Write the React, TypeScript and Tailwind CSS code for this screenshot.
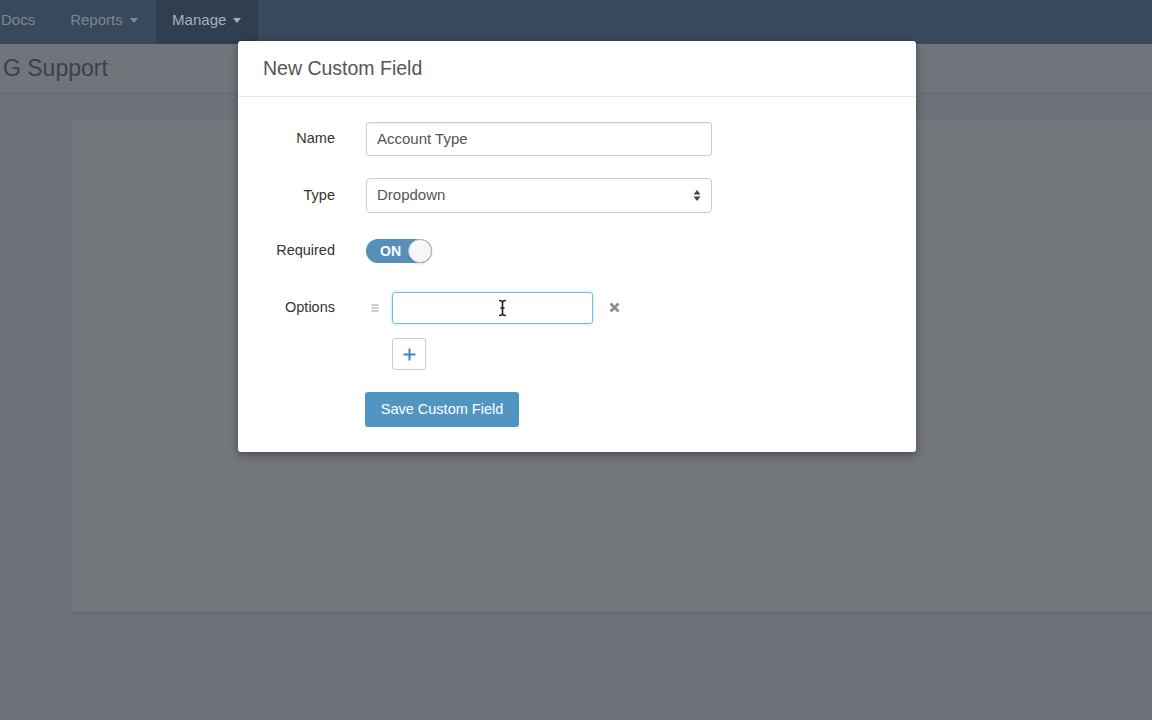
import React from 'react';

const font = { fontFamily: '"Liberation Sans", Arial, sans-serif' };

function NavBar() {
    return (
        <div className="flex h-[44px] items-stretch bg-[#38495b] pb-[4px] text-[15px]">
            <div className="flex items-center pl-[1px] pr-[35px] text-[#7b8795]">Docs</div>
            <div className="flex items-center gap-[7px] pr-[18px] text-[#7b8795]">
                Reports
                <span className="mt-[1px] h-0 w-0 border-x-[4px] border-t-[5px] border-x-transparent border-t-[#7b8795]" />
            </div>
            <div className="-mb-[4px] flex w-[102px] items-center justify-center gap-[7px] bg-[#2f3f50] pb-[4px] text-[#a7afb8]">
                Manage
                <span className="mt-[1px] h-0 w-0 border-x-[4px] border-t-[5px] border-x-transparent border-t-[#a7afb8]" />
            </div>
        </div>
    );
}

function Toggle() {
    return (
        <div className="flex h-[24px] w-[66px] items-center rounded-full bg-[#5590bb] pl-[14px]">
            <span className="text-[14px] font-bold text-white">ON</span>
            <span className="ml-auto h-[24px] w-[24px] rounded-full border border-[#b9b9b9] bg-[#f7f7f7] shadow-sm" />
        </div>
    );
}

function Row({ label, children, className }: { label: string; children: React.ReactNode; className?: string }) {
    return (
        <div className={'flex items-center gap-[31px] ' + (className ?? '')}>
            <label className="w-[72px] text-right text-[14.5px] text-[#333]">{label}</label>
            {children}
        </div>
    );
}

function CustomFieldModal() {
    return (
        <div className="absolute left-[238px] top-[41px] w-[678px] rounded-[3px] bg-white shadow-[0_3px_9px_rgba(0,0,0,0.35)]">
            <div className="flex h-[56px] items-center border-b border-[#e9e9e9] px-[25px]">
                <h4 className="text-[19.5px] text-[#555]">New Custom Field</h4>
            </div>
            <div className="px-[25px] pb-[25px] pt-[25px]">
                <Row label="Name">
                    <div className="flex h-[34px] w-[346px] items-center rounded-[3px] border border-[#ccc] px-[10px] text-[15px] text-[#555] shadow-[inset_0_1px_1px_rgba(0,0,0,0.06)]">
                        Account Type
                    </div>
                </Row>
                <Row label="Type" className="mt-[22px]">
                    <div className="flex h-[35px] w-[346px] items-center rounded-[4px] border border-[#ccc] px-[10px] text-[15px] text-[#555]">
                        Dropdown
                        <svg className="ml-auto" width="8" height="13" viewBox="0 0 8 13">
                            <path d="M4 1 L7.5 5.5 H0.5 Z" fill="#444" />
                            <path d="M4 12 L7.5 7.5 H0.5 Z" fill="#444" />
                        </svg>
                    </div>
                </Row>
                <Row label="Required" className="mt-[21px] h-[34px]">
                    <Toggle />
                </Row>
                <Row label="Options" className="mt-[24px]">
                    <div className="flex items-center">
                        <svg width="8" height="8" viewBox="0 0 8 8" className="ml-[5px] mr-[13px]">
                            <path d="M0.5 1 H7.5 M0.5 4 H7.5 M0.5 7 H7.5" stroke="#999" strokeWidth="1" />
                        </svg>
                        <div className="relative h-[32px] w-[201px] rounded-[3px] border border-[#6fc3d2] shadow-[0_0_3px_rgba(102,194,212,0.5)]">
                            {/* text cursor over the field */}
                            <svg className="absolute left-[105px] top-[6px]" width="9" height="18" viewBox="0 0 9 18">
                                <path d="M1 1.5 C3 1.5 4.5 2 4.5 3.5 V14.5 C4.5 16 3 16.5 1 16.5 M8 1.5 C6 1.5 4.5 2 4.5 3.5 M4.5 14.5 C4.5 16 6 16.5 8 16.5 M2.5 9 H6.5" stroke="#222" strokeWidth="1.6" fill="none" />
                            </svg>
                        </div>
                        <svg width="11" height="11" viewBox="0 0 11 11" className="ml-[16px] -mt-[2px]">
                            <path d="M1.5 1.5 L9.5 9.5 M9.5 1.5 L1.5 9.5" stroke="#8a8a8a" strokeWidth="2.6" />
                        </svg>
                    </div>
                </Row>
                <div className="ml-[129px] mt-[14px] flex h-[32px] w-[34px] items-center justify-center rounded-[3px] border border-[#ccc] bg-white">
                    <svg width="13" height="13" viewBox="0 0 13 13">
                        <path d="M6.5 0.5 V12.5 M0.5 6.5 H12.5" stroke="#3d87bd" strokeWidth="2" />
                    </svg>
                </div>
                <button className="ml-[102px] mt-[22px] h-[35px] w-[154px] rounded-[3px] bg-[#5196c2] text-[14.5px] text-white">
                    Save Custom Field
                </button>
            </div>
        </div>
    );
}

export default function App() {
    return (
        <div className="relative h-[720px] w-[1152px] overflow-hidden bg-[#6e717a]" style={font}>
            <NavBar />
            <div className="flex h-[50px] items-center border-b border-[#676a72] bg-[#71747b] pl-[3px]">
                <h1 className="text-[23px] text-[#3b414c]">G Support</h1>
            </div>
            <div className="ml-[70px] mt-[24px] h-[495px] rounded-l-[3px] border border-r-0 border-[#686b72] bg-[#73767a] shadow-[0_1px_1px_rgba(0,0,0,0.08)]" />
            <CustomFieldModal />
        </div>
    );
}
